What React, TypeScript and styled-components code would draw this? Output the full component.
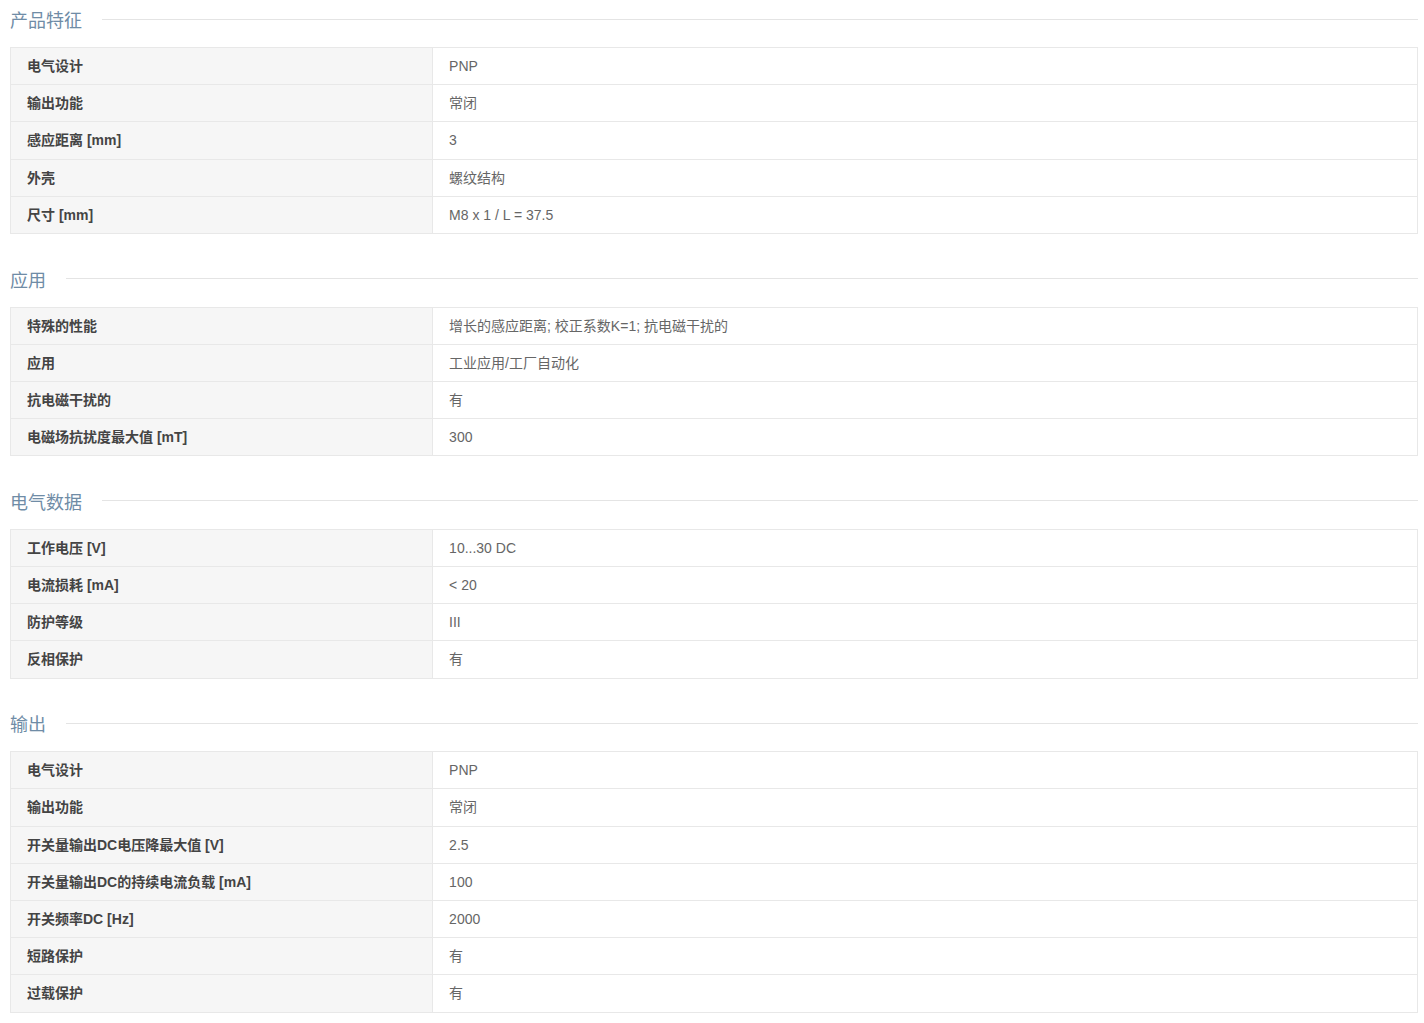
import styled, { createGlobalStyle } from 'styled-components';

const GlobalStyle = createGlobalStyle`
  body {
    margin: 0;
    background: #fff;
    font-family: "Liberation Sans", Arial, "Noto Sans CJK SC", sans-serif;
  }
`;

const Page = styled.div`
  padding: 0 6px 0 10px;
`;

const Section = styled.section`
  & + & {
    margin-top: 25.5px;
  }
`;

const SectionHeader = styled.div`
  display: flex;
  align-items: center;
  gap: 20px;
  height: 38px;
`;

const SectionTitle = styled.h2`
  margin: 0;
  font-size: 18px;
  font-weight: normal;
  color: #6f8ca6;
  white-space: nowrap;
`;

const Rule = styled.div`
  flex: 1;
  height: 1px;
  background: #e4e4e4;
`;

const SpecTable = styled.table`
  width: 100%;
  margin-top: 9px;
  border-collapse: collapse;
  table-layout: fixed;
  font-size: 14px;
`;

const Row = styled.tr``;

const Cell = styled.td<{ $label?: boolean }>`
  box-sizing: border-box;
  border: 1px solid #e8e8e8;
  padding: 9px 16px;
  line-height: 18.2px;
  width: ${({ $label }) => ($label ? '30%' : 'auto')};
  background: ${({ $label }) => ($label ? '#f6f6f6' : '#fff')};
  color: ${({ $label }) => ($label ? '#444' : '#666')};
  font-weight: ${({ $label }) => ($label ? 'bold' : 'normal')};
`;

const sections: { title: string; rows: [string, string][] }[] = [
  {
    title: '产品特征',
    rows: [
      ['电气设计', 'PNP'],
      ['输出功能', '常闭'],
      ['感应距离 [mm]', '3'],
      ['外壳', '螺纹结构'],
      ['尺寸 [mm]', 'M8 x 1 / L = 37.5'],
    ],
  },
  {
    title: '应用',
    rows: [
      ['特殊的性能', '增长的感应距离; 校正系数K=1; 抗电磁干扰的'],
      ['应用', '工业应用/工厂自动化'],
      ['抗电磁干扰的', '有'],
      ['电磁场抗扰度最大值 [mT]', '300'],
    ],
  },
  {
    title: '电气数据',
    rows: [
      ['工作电压 [V]', '10...30 DC'],
      ['电流损耗 [mA]', '< 20'],
      ['防护等级', 'III'],
      ['反相保护', '有'],
    ],
  },
  {
    title: '输出',
    rows: [
      ['电气设计', 'PNP'],
      ['输出功能', '常闭'],
      ['开关量输出DC电压降最大值 [V]', '2.5'],
      ['开关量输出DC的持续电流负载 [mA]', '100'],
      ['开关频率DC [Hz]', '2000'],
      ['短路保护', '有'],
      ['过载保护', '有'],
    ],
  },
];

const App = () => {
  return (
    <>
      <GlobalStyle />
      <Page>
        {sections.map((section) => (
          <Section key={section.title}>
            <SectionHeader>
              <SectionTitle>{section.title}</SectionTitle>
              <Rule />
            </SectionHeader>
            <SpecTable>
              <tbody>
                {section.rows.map(([label, value]) => (
                  <Row key={label}>
                    <Cell $label>{label}</Cell>
                    <Cell>{value}</Cell>
                  </Row>
                ))}
              </tbody>
            </SpecTable>
          </Section>
        ))}
      </Page>
    </>
  );
};

export default App;
